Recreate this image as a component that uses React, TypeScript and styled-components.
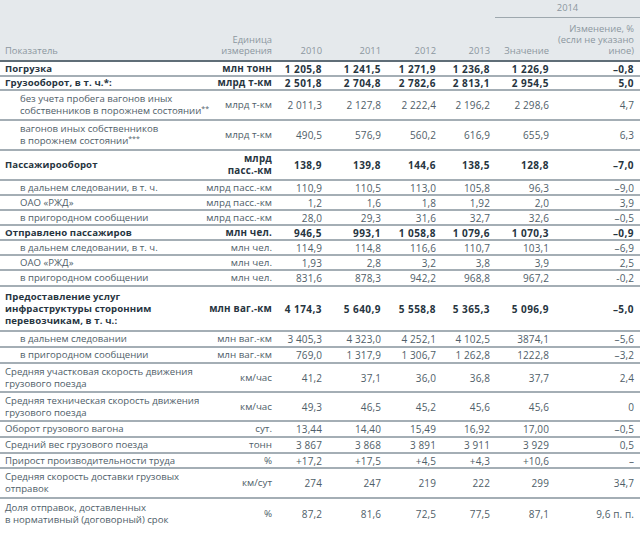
import React from "react";
import styled, { createGlobalStyle } from "styled-components";

const Global = createGlobalStyle`
  html, body { margin: 0; padding: 0; background: #ffffff; }
  body { font-family: "Open Sans", "Noto Sans", sans-serif; }
`;

const Table = styled.table`
  width: 640px;
  border-collapse: collapse;
  table-layout: fixed;
  font-size: 10px;
  line-height: 12px;
  color: #4f5e69;
`;

const Head = styled.thead`
  background: #e5e9ec;
`;

const HeadCell = styled.th<{ $align?: string; $pr?: number; $pl?: number }>`
  font-weight: 400;
  color: #8c979f;
  font-size: 9.4px;
  line-height: 11px;
  text-align: ${(p) => p.$align || "right"};
  vertical-align: bottom;
  padding: 0 ${(p) => p.$pr ?? 3}px 4px ${(p) => p.$pl ?? 0}px;
  white-space: nowrap;
`;

const YearCell = styled.th`
  font-weight: 400;
  color: #8c979f;
  font-size: 9.4px;
  text-align: center;
  height: 15px;
  padding: 2px 0 0 0;
  vertical-align: top;
`;

const YearLine = styled.div`
  margin-left: 2px;
  border-bottom: 1px solid #9ea8ae;
  padding-bottom: 3px;
`;

const HeadRow = styled.tr<{ $last?: boolean }>`
  ${(p) => (p.$last ? "border-bottom: 2px solid #5f6d77;" : "")}
`;

const Row = styled.tr<{ $h: number }>`
  height: ${(p) => p.$h}px;
  border-bottom: 2px solid #a4aeb5;
  &:last-child {
    border-bottom: none;
  }
`;

const Label = styled.td<{ $bold?: boolean; $indent?: boolean }>`
  padding: 0 0 0 ${(p) => (p.$indent ? 20 : 5)}px;
  font-size: 9.6px;
  font-weight: ${(p) => (p.$bold ? 700 : 400)};
  letter-spacing: ${(p) => (p.$bold ? "0.1px" : "0")};
  color: ${(p) => (p.$bold ? "#27353f" : "#4f5e69")};
  vertical-align: middle;
  white-space: nowrap;
`;

const Unit = styled.td<{ $bold?: boolean }>`
  text-align: right;
  padding: 0 3px 0 0;
  font-size: 9.8px;
  font-weight: ${(p) => (p.$bold ? 700 : 400)};
  letter-spacing: ${(p) => (p.$bold ? "0.2px" : "0")};
  color: ${(p) => (p.$bold ? "#27353f" : "#4f5e69")};
  vertical-align: middle;
  white-space: nowrap;
`;

const Cell = styled.td<{ $bold?: boolean; $pr?: number }>`
  text-align: right;
  padding: 0 ${(p) => p.$pr ?? 3}px 0 0;
  font-weight: ${(p) => (p.$bold ? 700 : 400)};
  letter-spacing: ${(p) => (p.$bold ? "0.45px" : "0.1px")};
  color: ${(p) => (p.$bold ? "#27353f" : "#4f5e69")};
  vertical-align: middle;
  white-space: nowrap;
`;

const Sup = styled.sup`
  font-size: 7px;
  line-height: 0;
  vertical-align: 3px;
`;

type RowData = {
  label: React.ReactNode;
  unit: React.ReactNode;
  vals: string[];
  change: string;
  bold?: boolean;
  indent?: boolean;
  h: number;
};

const rows: RowData[] = [
  { label: "Погрузка", unit: "млн тонн", vals: ["1 205,8", "1 241,5", "1 271,9", "1 236,8", "1 226,9"], change: "–0,8", bold: true, h: 15 },
  { label: "Грузооборот, в т. ч.*:", unit: "млрд т-км", vals: ["2 501,8", "2 704,8", "2 782,6", "2 813,1", "2 954,5"], change: "5,0", bold: true, h: 14 },
  {
    label: (
      <>
        без учета пробега вагонов иных
        <br />
        собственников в порожнем состоянии<Sup>**</Sup>
      </>
    ),
    unit: "млрд т-км", vals: ["2 011,3", "2 127,8", "2 222,4", "2 196,2", "2 298,6"], change: "4,7", indent: true, h: 30,
  },
  {
    label: (
      <>
        вагонов иных собственников
        <br />
        в порожнем состоянии<Sup>***</Sup>
      </>
    ),
    unit: "млрд т-км", vals: ["490,5", "576,9", "560,2", "616,9", "655,9"], change: "6,3", indent: true, h: 30,
  },
  {
    label: "Пассажирооборот",
    unit: (
      <>
        млрд
        <br />
        пасс.-км
      </>
    ),
    vals: ["138,9", "139,8", "144,6", "138,5", "128,8"], change: "–7,0", bold: true, h: 30,
  },
  { label: "в дальнем следовании, в т. ч.", unit: "млрд пасс.-км", vals: ["110,9", "110,5", "113,0", "105,8", "96,3"], change: "–9,0", indent: true, h: 15 },
  { label: "ОАО «РЖД»", unit: "млрд пасс.-км", vals: ["1,2", "1,6", "1,8", "1,92", "2,0"], change: "3,9", indent: true, h: 15 },
  { label: "в пригородном сообщении", unit: "млрд пасс.-км", vals: ["28,0", "29,3", "31,6", "32,7", "32,6"], change: "–0,5", indent: true, h: 15 },
  { label: "Отправлено пассажиров", unit: "млн чел.", vals: ["946,5", "993,1", "1 058,8", "1 079,6", "1 070,3"], change: "–0,9", bold: true, h: 15 },
  { label: "в дальнем следовании, в т. ч.", unit: "млн чел.", vals: ["114,9", "114,8", "116,6", "110,7", "103,1"], change: "–6,9", indent: true, h: 15 },
  { label: "ОАО «РЖД»", unit: "млн чел.", vals: ["1,93", "2,8", "3,2", "3,8", "3,9"], change: "2,5", indent: true, h: 15 },
  { label: "в пригородном сообщении", unit: "млн чел.", vals: ["831,6", "878,3", "942,2", "968,8", "967,2"], change: "-0,2", indent: true, h: 16 },
  {
    label: (
      <>
        Предоставление услуг
        <br />
        инфраструктуры сторонним
        <br />
        перевозчикам, в т. ч.:
      </>
    ),
    unit: "млн ваг.-км", vals: ["4 174,3", "5 640,9", "5 558,8", "5 365,3", "5 096,9"], change: "–5,0", bold: true, h: 45,
  },
  { label: "в дальнем следовании", unit: "млн ваг.-км", vals: ["3 405,3", "4 323,0", "4 252,1", "4 102,5", "3874,1"], change: "–5,6", indent: true, h: 16 },
  { label: "в пригородном сообщении", unit: "млн ваг.-км", vals: ["769,0", "1 317,9", "1 306,7", "1 262,8", "1222,8"], change: "–3,2", indent: true, h: 16 },
  {
    label: (
      <>
        Средняя участковая скорость движения
        <br />
        грузового поезда
      </>
    ),
    unit: "км/час", vals: ["41,2", "37,1", "36,0", "36,8", "37,7"], change: "2,4", h: 29,
  },
  {
    label: (
      <>
        Средняя техническая скорость движения
        <br />
        грузового поезда
      </>
    ),
    unit: "км/час", vals: ["49,3", "46,5", "45,2", "45,6", "45,6"], change: "0", h: 29,
  },
  { label: "Оборот грузового вагона", unit: "сут.", vals: ["13,44", "14,40", "15,49", "16,92", "17,00"], change: "–0,5", h: 16 },
  { label: "Средний вес грузового поезда", unit: "тонн", vals: ["3 867", "3 868", "3 891", "3 911", "3 929"], change: "0,5", h: 16 },
  { label: "Прирост производительности труда", unit: "%", vals: ["+17,2", "+17,5", "+4,5", "+4,3", "+10,6"], change: "–", h: 15 },
  {
    label: (
      <>
        Средняя скорость доставки грузовых
        <br />
        отправок
      </>
    ),
    unit: "км/сут", vals: ["274", "247", "219", "222", "299"], change: "34,7", h: 30,
  },
  {
    label: (
      <>
        Доля отправок, доставленных
        <br />
        в нормативный (договорный) срок
      </>
    ),
    unit: "%", vals: ["87,2", "81,6", "72,5", "77,5", "87,1"], change: "9,6 п. п.", h: 30,
  },
];

const widths = [205, 70, 50, 59, 55, 54, 59, 88];

export default function App() {
  return (
    <>
      <Global />
      <Table>
        <colgroup>
          {widths.map((w, i) => (
            <col key={i} style={{ width: w }} />
          ))}
        </colgroup>
        <Head>
          <HeadRow>
            <HeadCell rowSpan={2} $align="left" $pl={5}>
              Показатель
            </HeadCell>
            <HeadCell rowSpan={2}>
              Единица
              <br />
              измерения
            </HeadCell>
            <HeadCell rowSpan={2}>2010</HeadCell>
            <HeadCell rowSpan={2}>2011</HeadCell>
            <HeadCell rowSpan={2}>2012</HeadCell>
            <HeadCell rowSpan={2}>2013</HeadCell>
            <YearCell colSpan={2}>
              <YearLine>2014</YearLine>
            </YearCell>
          </HeadRow>
          <HeadRow $last>
            <HeadCell>Значение</HeadCell>
            <HeadCell $pr={6} style={{ height: 38 }}>
              Изменение, %
              <br />
              (если не указано
              <br />
              иное)
            </HeadCell>
          </HeadRow>
        </Head>
        <tbody>
          {rows.map((r, i) => (
            <Row key={i} $h={r.h}>
              <Label $bold={r.bold} $indent={r.indent}>
                {r.label}
              </Label>
              <Unit $bold={r.bold}>{r.unit}</Unit>
              {r.vals.map((v, j) => (
                <Cell key={j} $bold={r.bold}>
                  {v}
                </Cell>
              ))}
              <Cell $bold={r.bold} $pr={6}>
                {r.change}
              </Cell>
            </Row>
          ))}
        </tbody>
      </Table>
    </>
  );
}
